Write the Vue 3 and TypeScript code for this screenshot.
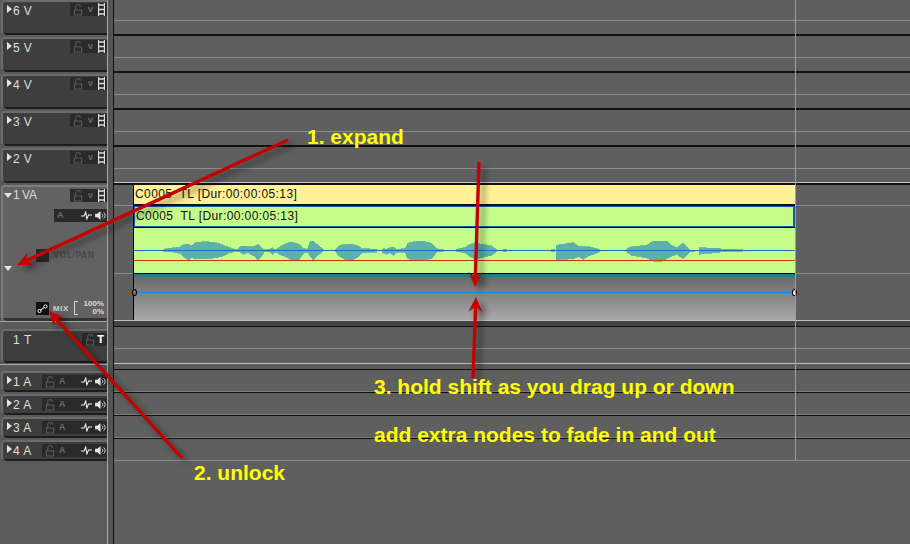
<script setup lang="ts">
type Pt = [number, number, number];

const videoTracks = ['6 V', '5 V', '4 V', '3 V', '2 V'];
const audioTracks = ['1 A', '2 A', '3 A', '4 A'];
const clipLabel = 'C0005  TL [Dur:00:00:05:13]';

function blob(offset: number, pts: Pt[]): string {
  const mapY = (z: number) => 236 + z / 3;
  const mapX = (z: number) => offset + z / 3;
  const top = pts.map((p) => `${mapX(p[0]).toFixed(1)},${mapY(p[1]).toFixed(1)}`);
  const bottom = [...pts].reverse().map((p) => `${mapX(p[0]).toFixed(1)},${mapY(p[2]).toFixed(1)}`);
  return 'M' + top.concat(bottom).join('L') + 'Z';
}

const wave: string = [
  blob(155, [[25,40,46],[50,36,47],[75,33,52],[85,26,62],[100,24,72],[110,30,65],[120,20,68],[150,17,68],[185,20,65],[205,28,60],[225,35,50],[245,42,45],[255,32,48],[265,30,55],[280,33,50],[300,30,62],[308,25,72],[320,35,60],[328,42,46],[345,40,48],[352,35,55],[362,42,48],[375,32,55],[390,24,62],[410,18,72],[432,25,72],[445,38,52],[458,40,48],[465,18,60],[475,15,72],[485,25,60],[505,40,46]]),
  blob(155, [[542,40,48],[555,28,62],[570,26,70],[590,24,72],[610,30,62],[622,38,50],[665,40,48]]),
  blob(155, [[683,38,50],[695,40,55],[705,35,50],[715,33,58],[725,40,48],[750,38,48],[758,22,68],[775,18,72],[800,15,72],[830,22,68],[845,38,48],[868,42,46]]),
  blob(450, [[18,40,46],[45,35,50],[60,25,62],[75,22,70],[105,26,62],[125,30,58],[138,40,48]]),
  blob(450, [[160,40,47],[168,40,47]]),
  blob(450, [[305,40,47],[312,40,47]]),
  blob(450, [[318,28,72],[340,25,70],[370,20,68],[385,30,62],[400,32,70],[415,32,60],[430,35,55],[447,40,48]]),
  blob(450, [[530,38,48],[545,32,58],[570,30,62],[590,28,66],[610,15,75],[635,15,75],[650,15,68],[665,28,60],[680,35,55],[700,20,68],[712,35,55],[720,42,47],[732,42,47]]),
  blob(450, [[747,35,55],[770,36,52],[805,36,50],[815,40,46],[855,40,46],[880,42,46]]),
].join('');

function arrow(x1: number, y1: number, x2: number, y2: number, w = 3.4): string {
  const len = Math.hypot(x2 - x1, y2 - y1);
  const ux = (x2 - x1) / len;
  const uy = (y2 - y1) / len;
  const nx = -uy;
  const ny = ux;
  const at = (along: number, side: number) =>
    `${(x2 - ux * along + nx * side).toFixed(1)},${(y2 - uy * along + ny * side).toFixed(1)}`;
  const s = (x: number, y: number, side: number) =>
    `${(x + nx * side).toFixed(1)},${(y + ny * side).toFixed(1)}`;
  return [s(x1, y1, w / 2), at(11, w / 2), at(15, 7), at(0, 0), at(15, -7), at(11, -w / 2), s(x1, y1, -w / 2)].join(' ');
}

const arrows: string[] = [
  arrow(288, 140, 17, 265),
  arrow(182, 458, 49, 311),
  arrow(479, 162, 475, 287),
  arrow(473, 378, 476, 297),
];
</script>

<template>
  <div class="screen">
    <svg class="defs" width="0" height="0" aria-hidden="true">
      <symbol id="ic-lock" viewBox="0 0 11 13">
        <path d="M3 6V3a2.500 2.500 0 0 1 5 0M1.500 6.500h8v5.500h-8z" fill="none" stroke="currentColor" stroke-width="1.200" />
      </symbol>
      <symbol id="ic-film" viewBox="0 0 7 13">
        <path d="M.5 0v13M6.500 0v13M1 2h5M1 6.500h5M1 11h5" fill="none" stroke="currentColor" stroke-width="1.300" />
      </symbol>
      <symbol id="ic-pulse" viewBox="0 0 14 11">
        <path d="M0 6h4l2-5 1.500 9L9.500 5H14" fill="none" stroke="currentColor" stroke-width="1.300" />
      </symbol>
      <symbol id="ic-speaker" viewBox="0 0 12 10">
        <path d="M0 3h2.500L6 0v10L2.500 7H0z" fill="currentColor" />
        <path d="M7.500 3a2.500 2.500 0 0 1 0 4M9.500 1.500a4.500 4.500 0 0 1 0 7" fill="none" stroke="currentColor" stroke-width="1" />
      </symbol>
      <symbol id="ic-link" viewBox="0 0 13 13">
        <path d="M4 8.500L9 5" stroke="#fff" stroke-width="1" />
        <circle cx="3.500" cy="9" r="1.600" fill="#000" stroke="#fff" />
        <circle cx="9.500" cy="4.500" r="1.600" fill="#000" stroke="#fff" />
      </symbol>
    </svg>

    <aside class="heads">
      <div v-for="t in videoTracks" :key="t" class="head head-v">
        <div class="label"><i class="tri-right"></i><span>{{ t }}</span></div>
        <div class="strip strip-v">
          <svg class="lock"><use href="#ic-lock" /></svg>
          <b class="ch">v</b>
          <svg class="film"><use href="#ic-film" /></svg>
        </div>
      </div>

      <div class="head head-va">
        <div class="va-top">
          <div class="label"><i class="tri-down"></i><span>1 VA</span></div>
          <div class="strip strip-v">
            <svg class="lock"><use href="#ic-lock" /></svg>
            <b class="ch">v</b>
            <svg class="film"><use href="#ic-film" /></svg>
          </div>
        </div>
        <div class="strip strip-a2">
          <b class="ch">A</b>
          <svg class="pulse"><use href="#ic-pulse" /></svg>
          <svg class="speaker"><use href="#ic-speaker" /></svg>
        </div>
        <div class="volpan"><i class="sq"></i><span>VOL/PAN</span></div>
        <i class="tri-down tri-expand"></i>
        <div class="mix">
          <svg class="sq sq-link"><use href="#ic-link" /></svg>
          <span class="mix-word">MIX</span>
          <i class="bracket"></i>
          <span class="pct"><span>100%</span><span>0%</span></span>
        </div>
      </div>
      <div class="rule rule-a"></div>

      <div class="head head-t">
        <div class="label label-t"><span>1 T</span></div>
        <div class="strip strip-t">
          <svg class="lock"><use href="#ic-lock" /></svg>
          <b class="t-mark">T</b>
        </div>
      </div>
      <div class="rule rule-b"></div>

      <div v-for="t in audioTracks" :key="t" class="head head-audio">
        <div class="label"><i class="tri-right"></i><span>{{ t }}</span></div>
        <div class="strip strip-audio">
          <svg class="lock"><use href="#ic-lock" /></svg>
          <b class="ch">A</b>
          <span class="fill"></span>
          <svg class="pulse"><use href="#ic-pulse" /></svg>
          <svg class="speaker"><use href="#ic-speaker" /></svg>
        </div>
      </div>
    </aside>

    <div class="gutter"></div>

    <main class="timeline">
      <div class="lanes-v">
        <div v-for="t in videoTracks" :key="t" class="lane-v"></div>
      </div>

      <div class="lane-va">
        <div class="side side-left"><div class="s1"></div><div class="s2"></div></div>
        <div class="clip">
          <div class="clip-yellow">{{ clipLabel }}</div>
          <div class="clip-name">{{ clipLabel }}</div>
          <div class="clip-wave">
            <svg class="wave" viewBox="134 228 661 45" width="661" height="45">
              <path :d="wave" fill="#5cb2a8" stroke="#5cb2a8" stroke-width="0.8" shape-rendering="crispEdges" />
              <rect x="134" y="250" width="661" height="1" fill="#1670b8" />
              <rect x="134" y="260" width="661" height="1" fill="#c23c00" />
            </svg>
          </div>
          <div class="clip-teal"></div>
          <div class="clip-gain">
            <div class="gain-line"></div>
            <i class="node node-l"></i>
            <i class="node node-r"></i>
          </div>
        </div>
        <div class="side"><div class="s1"></div><div class="s2"></div></div>
      </div>
      <div class="sep"></div>

      <div class="lane-t"><div class="lane-t-mid"></div></div>
      <div class="sep2"></div>

      <div class="lanes-a">
        <div v-for="t in audioTracks" :key="t" class="lane-a"></div>
      </div>

      <div class="playhead"></div>
    </main>

    <svg class="arrows" width="910" height="544" viewBox="0 0 910 544">
      <polygon v-for="(a, i) in arrows" :key="i" :points="a" fill="#c40000" />
    </svg>
    <div class="note note-1">1. expand</div>
    <div class="note note-2">2. unlock</div>
    <div class="note note-3">3. hold shift as you drag up or down</div>
    <div class="note note-4">add extra nodes to fade in and out</div>
  </div>
</template>

<style scoped>
.screen {
  position: relative;
  display: flex;
  width: 910px;
  height: 544px;
  overflow: hidden;
  background: #5a5a5a;
  font-family: "Liberation Sans", Arial, sans-serif;
}
.defs { position: absolute; }

.heads {
  display: flex;
  flex-direction: column;
  width: 107px;
  flex: none;
  border-right: 1px solid #a8a8a8;
  box-sizing: content-box;
}
.head {
  position: relative;
  display: flex;
  justify-content: space-between;
  align-items: flex-start;
  box-sizing: border-box;
  background: #3e3e3e;
  border-radius: 4px 0 0 4px;
  margin-left: 1px;
  box-shadow: inset 0 2px 0 #6c6c6c, inset 2px 0 0 #6c6c6c, inset 0 -2px 0 #1c1c1c;
}
.head-v { height: 35px; margin-bottom: 2px; padding-top: 3px; }
.head-v:nth-child(6) { margin-bottom: 1px; }
.label {
  display: flex;
  align-items: flex-start;
  color: #dedede;
  font-size: 12px;
  line-height: 13px;
  letter-spacing: 0.4px;
  white-space: pre;
}
.head-v .label, .head-audio .label { padding: 2px 0 0 6px; }
.head-audio .label { padding-top: 1px; }
.tri-right {
  display: block;
  width: 0;
  height: 0;
  margin: 0 1px 0 0;
  border-left: 5px solid #e4e4e4;
  border-top: 4px solid transparent;
  border-bottom: 4px solid transparent;
}
.tri-down {
  display: block;
  width: 0;
  height: 0;
  margin: 4px 1px 0 0;
  border-top: 5px solid #e4e4e4;
  border-left: 4px solid transparent;
  border-right: 4px solid transparent;
}
.strip {
  display: flex;
  align-items: center;
  height: 13px;
  background: #2a2a2a;
  box-sizing: border-box;
}
.strip-v { width: 37px; padding: 0 2px 0 3px; justify-content: space-between; }
.lock { width: 10px; height: 12px; color: #5a5a5a; }
.film { width: 7px; height: 13px; color: #dcdcdc; }
.ch { color: #6a6a6a; font-size: 9px; line-height: 13px; font-weight: 700; }
.pulse { width: 11px; height: 9px; color: #f0f0f0; }
.speaker { width: 11px; height: 9px; color: #e8e8e8; margin-left: 3px; }

.head-va {
  height: 136px;
  display: block;
  padding-top: 4px;
  background: #626262;
  box-shadow: inset 0 2px 0 #7c7c7c, inset 2px 0 0 #7c7c7c, inset 0 -3px 0 #333;
}
.va-top { display: flex; justify-content: space-between; align-items: flex-start; }
.va-top .label { padding-left: 3px; letter-spacing: 0; word-spacing: -1px; }
.strip-a2 {
  width: 53px;
  margin: 7px 0 0 53px;
  padding: 0 0 0 3px;
  justify-content: flex-start;
}
.strip-a2 .pulse { margin-left: auto; }
.strip-a2 .speaker { margin-right: 1px; }
.volpan {
  display: flex;
  align-items: center;
  margin: 27px 0 0 35px;
  color: #4c4c4c;
  font-family: "DejaVu Sans", sans-serif;
  font-size: 8px;
  font-weight: 700;
  letter-spacing: 0.4px;
  height: 13px;
}
.sq { display: block; width: 13px; height: 13px; background: #2a2a2a; margin-right: 4px; flex: none; }
.tri-expand { margin: 4px 0 0 3px; }
.mix {
  display: flex;
  align-items: center;
  margin: 30px 0 0 35px;
  height: 14px;
}
.sq-link { background: #111; }
.mix-word { color: #cfcfcf; font-size: 8px; font-weight: 700; letter-spacing: 0.6px; }
.bracket {
  display: block;
  width: 3px;
  height: 12px;
  margin: 0 3px 0 5px;
  border: 1px solid #d4d4d4;
  border-right: 0;
}
.pct {
  display: flex;
  flex-direction: column;
  align-items: flex-end;
  width: 23px;
  color: #dcdcdc;
  font-size: 8px;
  line-height: 8px;
  font-weight: 700;
}
.rule { border-bottom: 1px solid #a8a8a8; }
.rule-a { height: 0; margin-bottom: 7px; }
.rule-b { height: 0; margin: 1px 0 6px; }

.head-t { height: 34px; padding-top: 4px; }
.label-t { padding: 1px 0 0 12px; font-size: 12px; letter-spacing: 0.6px; }
.strip-t { width: 25px; padding: 0 3px 0 3px; justify-content: space-between; }
.t-mark { color: #f0f0f0; font-family: "DejaVu Sans", sans-serif; font-size: 10px; line-height: 13px; font-weight: 700; }

.head-audio { height: 21px; margin-bottom: 2px; padding-top: 4px; }
.strip-audio { width: 65px; padding: 0 0 0 3px; gap: 4px; }
.strip-audio .fill { flex: 1; }
.strip-audio .pulse { margin-right: -4px; }
.strip-audio .speaker { margin-right: 1px; }

.gutter { width: 5px; flex: none; background: #555; border-right: 1px solid #111; }

.timeline {
  position: relative;
  flex: 1;
  display: flex;
  flex-direction: column;
  background: #5f5f5f;
}
.lanes-v { flex: none; }
.lane-v {
  height: 37px;
  box-sizing: border-box;
  border-bottom: 1px solid #5f5f5f;
  background:
    linear-gradient(#8d8d8d, #8d8d8d) 0 20px / 100% 1px no-repeat,
    linear-gradient(#111, #111) 0 34px / 100% 2px no-repeat;
}
.lane-v:last-child {
  border-bottom: 0;
  background:
    linear-gradient(#8d8d8d, #8d8d8d) 0 20px / 100% 1px no-repeat,
    linear-gradient(#c4c4c4, #c4c4c4) 0 34px / 100% 1px no-repeat,
    linear-gradient(#111, #111) 0 35px / 100% 2px no-repeat;
}
.lane-va { display: flex; height: 135px; flex: none; }
.side { flex: 1; }
.side-left { flex: none; width: 19px; }
.s1 { height: 21px; box-sizing: border-box; border-bottom: 1px solid #8d8d8d; }
.s2 { height: 68px; box-sizing: border-box; border-bottom: 1px solid #8d8d8d; }
.clip {
  display: flex;
  flex-direction: column;
  width: 662px;
  flex: none;
  box-sizing: border-box;
  border-left: 1px solid #000;
  color: #111;
  font-size: 12px;
  letter-spacing: 0.4px;
  white-space: pre;
}
.clip-yellow {
  height: 19px;
  line-height: 18px;
  padding-left: 1px;
  background: #fff196;
  border-bottom: 2px solid #111;
  box-sizing: content-box;
}
.clip-name {
  height: 19px;
  line-height: 19px;
  padding-left: 1px;
  background: #c6fd8a;
  border: 1px solid #0f5cb8;
  border-width: 1px 2px 1px 1px;
}
.clip-wave {
  height: 45px;
  border-top: 1px solid #000;
  border-bottom: 1px solid #000;
  background: #c6fd8a;
}
.wave { display: block; }
.clip-teal { height: 3px; background: #1f7d8c; }
.clip-gain {
  position: relative;
  flex: 1;
  box-sizing: border-box;
  padding-top: 15px;
  background: linear-gradient(#6a6a6a, #a8a8a8);
}
.gain-line { height: 1px; background: #0d8fea; }
.node {
  position: absolute;
  top: 12px;
  width: 5px;
  height: 7px;
  box-sizing: border-box;
  border: 1px solid #000;
  border-radius: 50%;
}
.node-l { left: -2px; background: #777; }
.node-r { right: -2px; background: #fff; }

.sep { height: 6px; flex: none; background: #444; border-top: 1px solid #c0c0c0; box-sizing: border-box; }
.lane-t {
  height: 37px;
  flex: none;
  box-sizing: border-box;
  border-top: 1px solid #111;
}
.lane-t-mid { height: 22px; box-sizing: border-box; border-bottom: 1px solid #8d8d8d; }
.sep2 { height: 5px; flex: none; background: #5a5a5a; border-top: 1px solid #c0c0c0; border-bottom: 1px solid #111; box-sizing: content-box; }
.lanes-a { flex: none; }
.lane-a {
  height: 23px;
  box-sizing: border-box;
  border-bottom: 1px solid #111;
  box-shadow: inset 0 -1px 0 #7d7d7d;
}
.lane-a:last-child { border-bottom: 0; height: 22px; box-shadow: inset 0 -1px 0 #8d8d8d; }
.playhead {
  position: absolute;
  left: 681px;
  top: 0;
  width: 1px;
  height: 460px;
  background: #8fa5a5;
}

.arrows {
  position: absolute;
  left: 0;
  top: 0;
  filter: drop-shadow(5px 4px 3px rgba(0, 0, 0, 0.45));
}
.note {
  position: absolute;
  color: #ffff00;
  font-size: 21px;
  font-weight: 700;
  line-height: 24px;
  white-space: nowrap;
}
.note-1 { left: 307px; top: 125px; }
.note-2 { left: 194px; top: 461px; }
.note-3 { left: 374px; top: 375px; }
.note-4 { left: 374px; top: 423px; }
</style>
